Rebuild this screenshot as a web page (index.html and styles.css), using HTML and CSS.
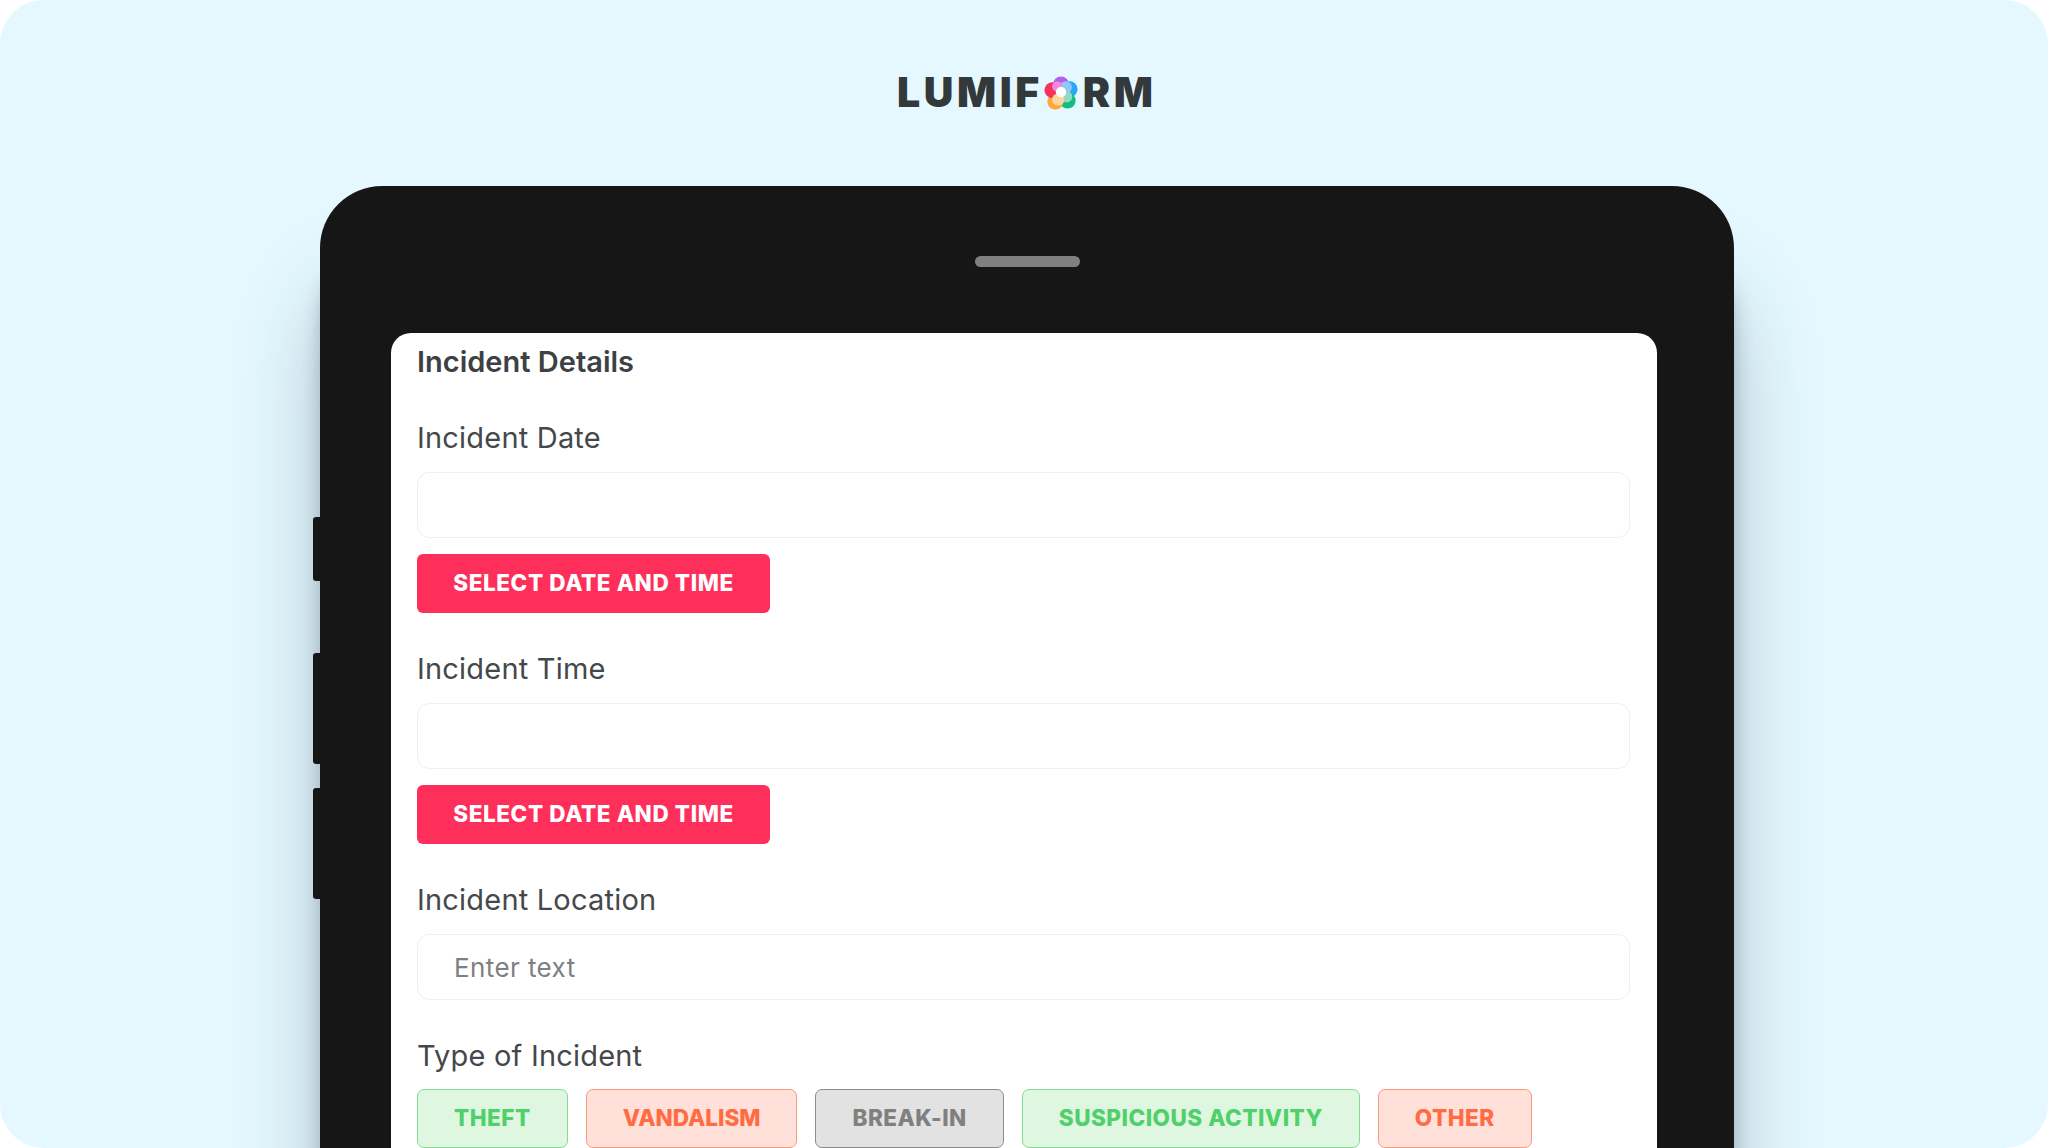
FILE: index.html
```html
<!DOCTYPE html>
<html lang="en">
<head>
  <meta charset="UTF-8" />
  <title>Lumiform Incident Details</title>
  <link rel="stylesheet" href="styles.css">
</head>
<body>
  <div class="page">
    <header class="logo">
      <span>LUMIF</span>
      <svg class="logo-mark" viewBox="0 0 36 36" width="34" height="34" aria-hidden="true">
        <circle cx="18" cy="9" r="8.5" fill="#b65cf0" />
        <circle cx="27" cy="14" r="8.5" fill="#28a8f5" />
        <circle cx="25" cy="26" r="8.5" fill="#12bd82" />
        <circle cx="12" cy="27" r="8.5" fill="#ffa53c" />
        <circle cx="9" cy="15" r="8.5" fill="#f7325f" />
        <circle cx="23" cy="12" r="6.5" fill="#92c8f8" />
        <circle cx="14" cy="11" r="5.5" fill="#f08ad8" />
        <circle cx="24" cy="22" r="6" fill="#8fdcc0" />
        <circle cx="15" cy="25" r="6.5" fill="#ffd59a" />
        <circle cx="18" cy="17" r="5.5" fill="#ffffff" />
      </svg>
      <span>RM</span>
    </header>

    <div class="device">
      <div class="side-keys">
        <div class="key key-short"></div>
        <div class="key"></div>
        <div class="key"></div>
      </div>
      <div class="device-top">
        <div class="speaker"></div>
      </div>

      <main class="screen">
        <h1 class="screen-title">Incident Details</h1>

        <section class="field">
          <label class="field-label">Incident Date</label>
          <div class="input"></div>
          <button class="btn" type="button">SELECT DATE AND TIME</button>
        </section>

        <section class="field">
          <label class="field-label">Incident Time</label>
          <div class="input"></div>
          <button class="btn" type="button">SELECT DATE AND TIME</button>
        </section>

        <section class="field">
          <label class="field-label">Incident Location</label>
          <div class="input placeholder">Enter text</div>
        </section>

        <section class="field">
          <label class="field-label">Type of Incident</label>
          <div class="chips">
            <div class="chip chip-green">THEFT</div>
            <div class="chip chip-orange chip-tight">VANDALISM</div>
            <div class="chip chip-grey">BREAK-IN</div>
            <div class="chip chip-green">SUSPICIOUS ACTIVITY</div>
            <div class="chip chip-orange">OTHER</div>
          </div>
        </section>
      </main>
    </div>
  </div>
</body>
</html>
```

FILE: styles.css
```css
* {
  box-sizing: border-box;
}
html, body {
  margin: 0;
  height: 100%;
  background: #fff;
}
body {
  overflow: hidden;
  font-family: Inter, "Noto Sans", sans-serif;
  color: #3e4144;
}
.page {
  height: 1148px;
  overflow: hidden;
  background: #e5f8ff;
  border-radius: 44px;
}
.logo {
  height: 186px;
  padding-left: 897px;
  display: flex;
  align-items: flex-start;
  font-weight: 900;
  font-size: 41px;
  letter-spacing: 3.6px;
  line-height: 1;
  color: #33383b;
}
.logo span {
  margin-top: 72px;
}
.logo-mark {
  margin: 76px 5px 0 1px;
}
.device {
  position: relative;
  width: 1414px;
  margin-left: 320px;
  height: 1100px;
  padding: 0 77px 0 71px;
  background: #161616;
  border-radius: 62px 62px 0 0;
  box-shadow: 0 70px 22px -6px rgba(30, 45, 55, 0.45), 0 100px 90px -5px rgba(40, 65, 85, 0.3);
}
.side-keys {
  position: absolute;
  left: -7px;
  top: 331px;
  width: 7px;
  display: flex;
  flex-direction: column;
  gap: 24px;
}
.key {
  height: 111px;
  background: #161616;
  border-radius: 3px 0 0 3px;
}
.key-short {
  height: 64px;
  margin-bottom: 48px;
}
.device-top {
  height: 147px;
  padding-top: 70px;
  display: flex;
  justify-content: center;
}
.speaker {
  width: 105px;
  height: 11px;
  margin-left: 7px;
  border-radius: 6px;
  background: #808080;
}
.screen {
  background: #fff;
  border-radius: 20px 20px 0 0;
  height: 900px;
  padding: 0 27px 0 26px;
}
.screen-title {
  margin: 0;
  padding: 11px 0 2px;
  font-size: 29px;
  line-height: 36px;
  font-weight: 600;
  color: #3e4144;
}
.field {
  padding-top: 38px;
}
.field-label {
  display: block;
  font-size: 29px;
  line-height: 36px;
  letter-spacing: 0.2px;
  color: #45484b;
}
.input {
  height: 66px;
  margin-top: 16px;
  padding: 0 36px;
  background: #fff;
  border: 1px solid #eef0f1;
  border-radius: 12px;
  display: flex;
  align-items: center;
  font-size: 26px;
}
.placeholder {
  color: #7d8083;
  letter-spacing: 0.4px;
}
.btn {
  display: block;
  height: 59px;
  width: 353px;
  margin-top: 16px;
  padding: 0 0 2px;
  border: none;
  border-radius: 6px;
  background: #ff2f5b;
  color: #fff;
  font-family: Inter, sans-serif;
  font-weight: 800;
  font-size: 22.5px;
  letter-spacing: 0.6px;
  white-space: nowrap;
}
.chips {
  display: flex;
  gap: 18px;
  margin-top: 15px;
}
.chip {
  height: 59px;
  padding: 0 36px 2px;
  border: 1.5px solid;
  border-radius: 7px;
  display: flex;
  align-items: center;
  font-weight: 800;
  font-size: 22.5px;
  letter-spacing: 0.5px;
}
.chip-tight {
  letter-spacing: 0;
}
.chip-green {
  color: #4fd069;
  background: #dff7e1;
  border-color: #83dc94;
}
.chip-orange {
  color: #ff6b42;
  background: #ffe1da;
  border-color: #f89a80;
}
.chip-grey {
  color: #808080;
  background: #e2e2e2;
  border-color: #8c8c8c;
}
```
